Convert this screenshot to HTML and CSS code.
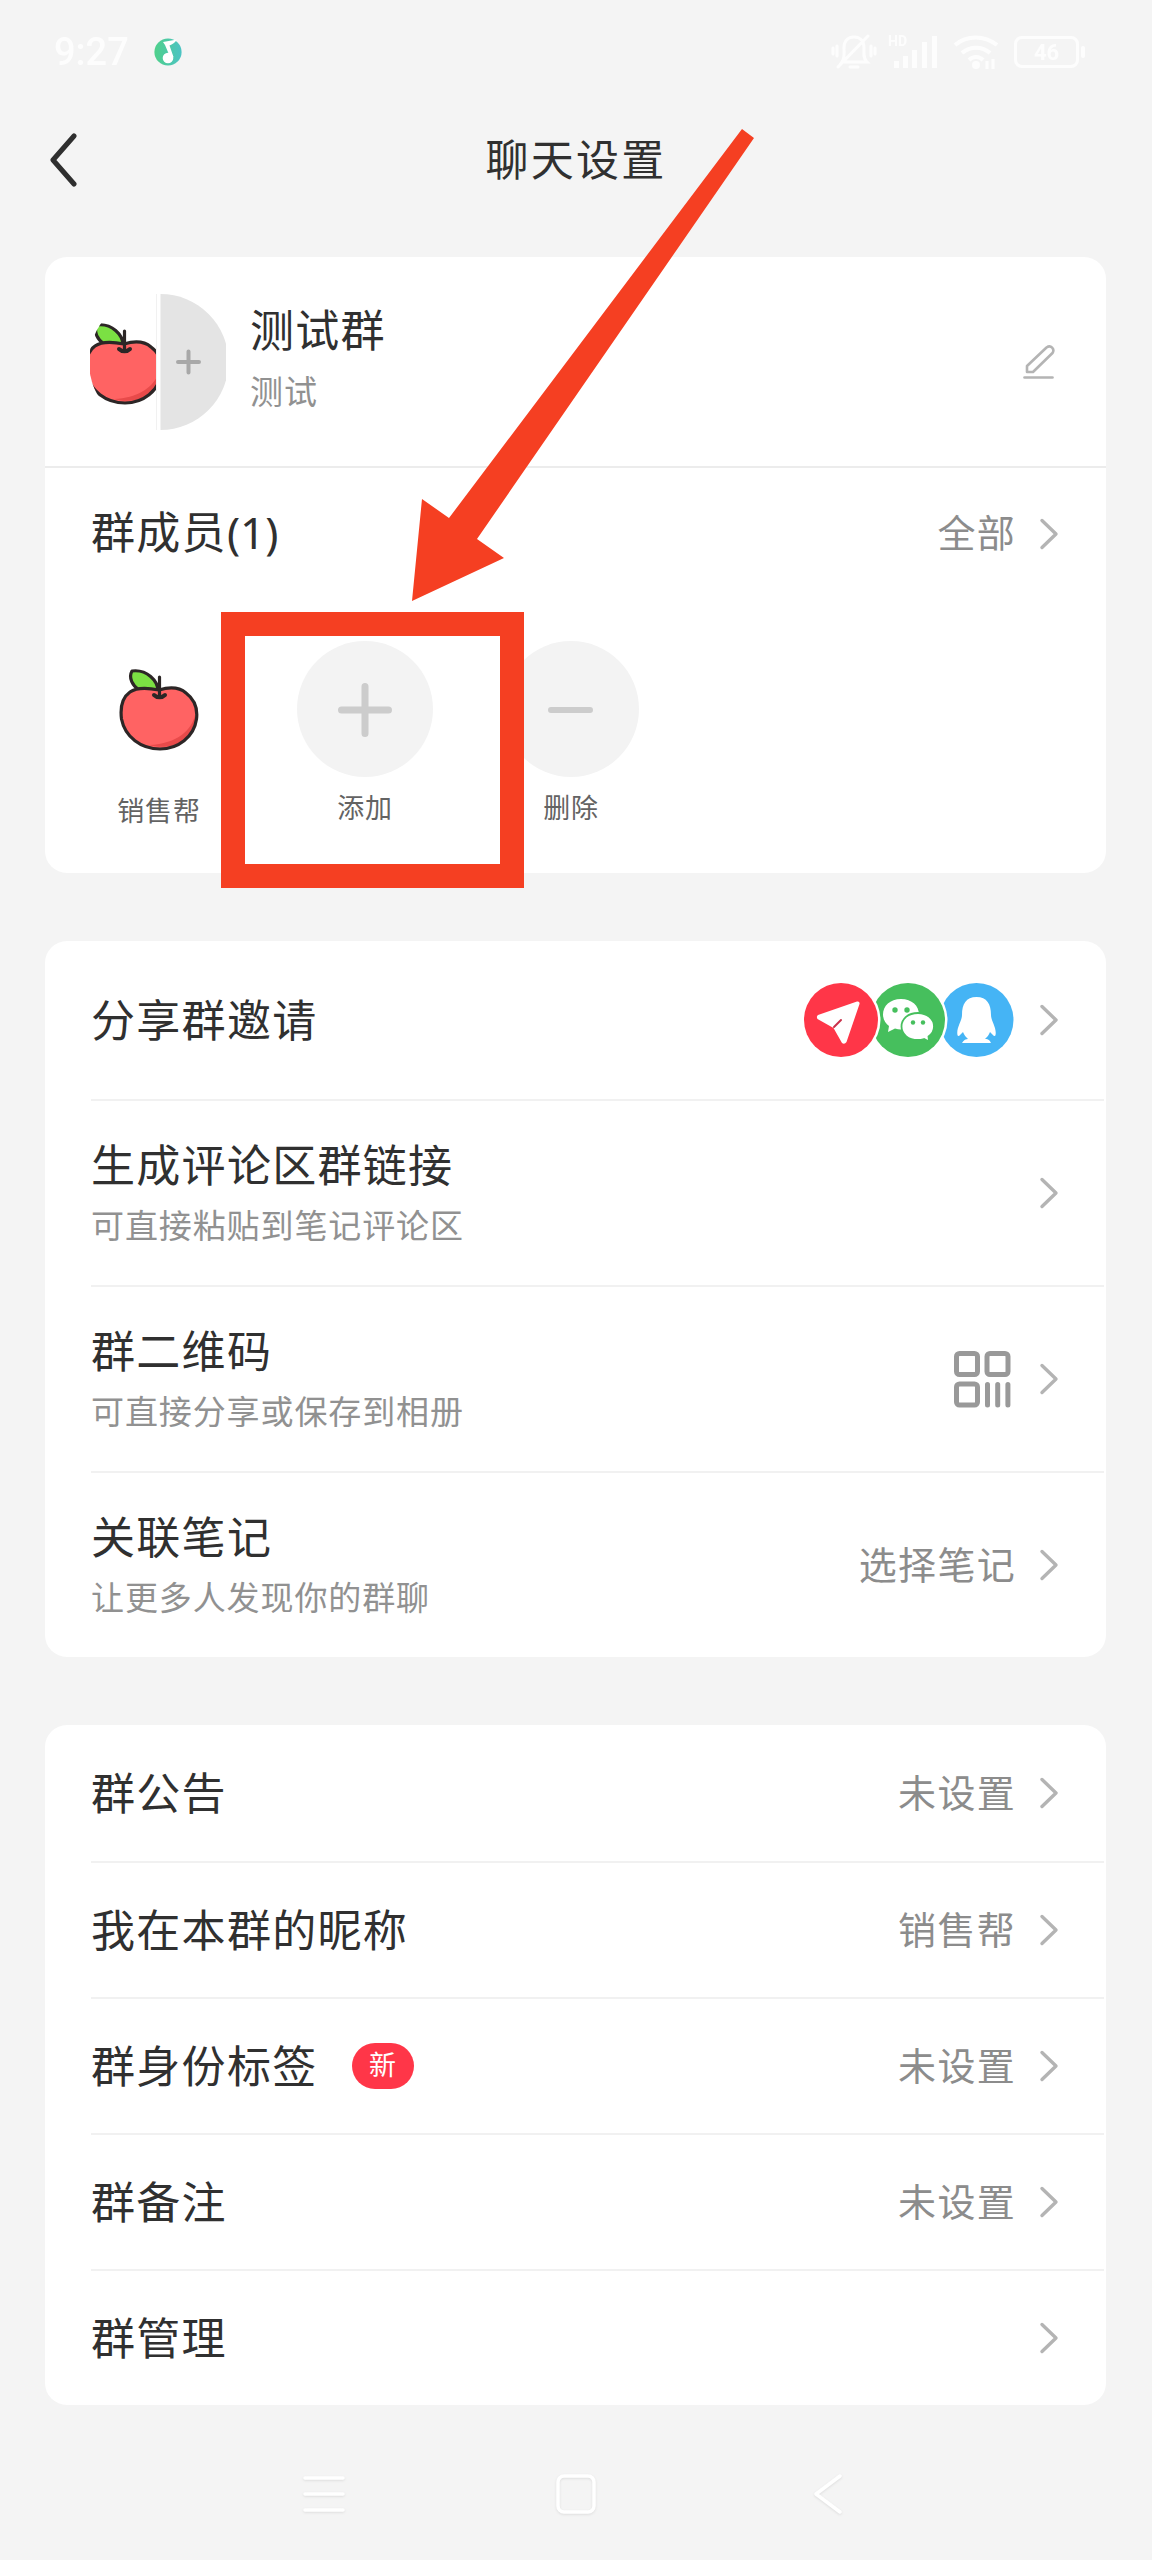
FILE: index.html
```html
<!DOCTYPE html>
<html lang="zh-CN">
<head>
<meta charset="utf-8">
<title>聊天设置</title>
<link rel="stylesheet" href="styles.css">
</head>
<body>
<svg class="defs" width="0" height="0" aria-hidden="true">
  <symbol id="chevron" viewBox="0 0 20 34"><path d="M3 3.500 17 17 3 30.500" fill="none" stroke="#b4b4b4" stroke-width="3.400" stroke-linecap="round" stroke-linejoin="round"/></symbol>
  <symbol id="apple" viewBox="0 0 80 84">
    <path d="M13 4C9 11 14 19 20 23L39 24C39 14 28 2 13 4Z" fill="#7be043" stroke="#2c2626" stroke-width="3.200" stroke-linejoin="round"/>
    <path d="M40 23C50 20 60 20 67 26C75 32 79 40 77.500 52C75 70 59 82 41 82C22 82 6 70 2.500 52C1 40 4 30 11 25C18 20 30 21 40 23Z" fill="#ff6363"/>
    <path d="M76 48C73 62 59 77 30 78C50 84 79 75 76 48Z" fill="#e84a4a"/>
    <path d="M40 23C50 20 60 20 67 26C75 32 79 40 77.500 52C75 70 59 82 41 82C22 82 6 70 2.500 52C1 40 4 30 11 25C18 20 30 21 40 23Z" fill="none" stroke="#2c2626" stroke-width="3.200"/>
    <path d="M40.500 10V29" fill="none" stroke="#2c2626" stroke-width="3.200" stroke-linecap="round"/>
    <path d="M35 28C38 31 43 31 46 28" fill="none" stroke="#2c2626" stroke-width="4" stroke-linecap="round"/>
  </symbol>
</svg>

<div class="phone">
  <div class="status">
    <span class="clock">9:27</span>
    <svg class="music" width="28" height="28" viewBox="0 0 28 28">
      <defs><linearGradient id="mg"><stop offset="0" stop-color="#4fd08a"/><stop offset="1" stop-color="#4cc3c4"/></linearGradient></defs>
      <circle cx="14" cy="14" r="13.600" fill="url(#mg)"/>
      <circle cx="14" cy="20" r="5.300" fill="#fff"/>
      <path d="M9 4 23 1.500Q20 6 15.500 7.500L19.500 19 16.500 20 11 7Z" fill="#fff"/>
    </svg>
    <div class="indicators">
      <svg width="46" height="38" viewBox="0 0 46 38" fill="none" stroke="#fff" stroke-width="3" stroke-linecap="round">
        <path d="M11 29C14 25 13 21 13 15C13 8 17 4 23 4S33 8 33 15C33 21 32 25 36 29ZM19 34H27M7 34 37 3M6 13V23M2 15V21M40 13V23M44 15V21"/>
      </svg>
      <div class="signal"><span class="hd">HD</span>
        <svg width="50" height="36" viewBox="0 0 50 36" fill="#fff"><path d="M5 27h5v7H5zM14 22h5v12h-5zM23 16h5v18h-5zM33 8h5v26h-5zM43 2h5v32h-5z"/></svg>
      </div>
      <svg class="wifi" width="46" height="36" viewBox="0 0 46 36">
        <g fill="none" stroke="#fff" stroke-width="4"><path d="M2 11C14 1 31 1 44 11"/><path d="M9 19C17 12 29 12 37 19"/><path d="M16 26C20 22 26 22 30 26"/></g>
        <circle cx="23" cy="31" r="4" fill="#fff"/><path d="M34 27v8M40 25v10" stroke="#fff" stroke-width="3"/>
      </svg>
      <div class="battery">46</div>
    </div>
  </div>

  <header class="navbar">
    <svg class="back" width="30" height="54" viewBox="0 0 30 54"><path d="M25 3 4 27 25 51" fill="none" stroke="#2f2f2f" stroke-width="5" stroke-linecap="round" stroke-linejoin="round"/></svg>
    <h1>聊天设置</h1>
  </header>

  <main>
    <section class="card">
      <div class="group">
        <svg class="avatar" width="136" height="136" viewBox="0 0 136 136">
          <defs><clipPath id="half"><path d="M67 0A68 68 0 0 0 67 136Z"/></clipPath></defs>
          <g clip-path="url(#half)"><use href="#apple" x="-6" y="27" width="80" height="84"/></g>
          <path d="M66.500 0V136" stroke="#f1f1f1"/>
          <path d="M70.500 0A68 68 0 0 1 70.500 136Z" fill="#e4e4e4"/>
          <path d="M88 68h21M98.500 57.500v21" stroke="#a8a8a8" stroke-width="4" stroke-linecap="round"/>
        </svg>
        <div class="group-text"><div class="title">测试群</div><div class="sub">测试</div></div>
        <svg class="edit" width="34" height="36" viewBox="0 0 34 36" fill="none" stroke="#b4b4b4" stroke-width="2.600" stroke-linecap="round" stroke-linejoin="round">
          <path d="M5 28V22L24.500 3.500C29 .5 33 5 30.500 9L11 28Z"/><path d="M2.500 33.500H30.500"/>
        </svg>
      </div>
      <div class="members-head"><span class="title">群成员<span class="count">(1)</span></span><span class="value">全部</span><svg class="chev"><use href="#chevron"/></svg></div>
      <div class="members">
        <div class="member"><div class="pic"><svg width="80" height="84"><use href="#apple"/></svg></div><span class="low">销售帮</span></div>
        <div class="member"><div class="pic round"><svg width="136" height="136" viewBox="0 0 136 136"><path d="M44.500 69h47M68 45.500v47" stroke="#ccc" stroke-width="7" stroke-linecap="round"/></svg></div><span>添加</span></div>
        <div class="member"><div class="pic round"><svg width="136" height="136" viewBox="0 0 136 136"><path d="M48 69h39" stroke="#ccc" stroke-width="6" stroke-linecap="round"/></svg></div><span>删除</span></div>
      </div>
    </section>

    <section class="card">
      <div class="row share"><span class="title">分享群邀请</span>
        <svg class="apps" width="211" height="76" viewBox="0 0 211 76">
          <circle cx="173.500" cy="38" r="37" fill="#45b4f5"/>
          <path d="M173.500 15C163 15 159 22 159 33C159 39 153 46 154.500 53C155 56 158 52 160 50C161 53 163 55 165 57C161 57 160 60 159 61H188C187 59 186 57 182 57C184 55 186 53 187 50C189 52 192 56 192.500 53C194 46 188 39 188 33C188 22 184 15 173.500 15Z" fill="#fff"/>
          <circle cx="105" cy="38" r="39.500" fill="#fff"/><circle cx="105" cy="38" r="37" fill="#46bf5d"/>
          <path d="M98 17C87 17 80 24 80 32.500C80 38 83 42 86 44L85 50L92 46.500C94 47 96 47.500 98 47.500C109 47.500 116 41 116 32.500S109 17 98 17Z" fill="#fff"/>
          <path d="M115 31C105 31 98.500 37 98.500 44.500S105 58 115 58C117 58 119 57.600 121 57L126 59.500L125.500 54.500C129 52 131 48.500 131 44.500C131 37 124 31 115 31Z" fill="#fff" stroke="#46bf5d" stroke-width="1.800"/>
          <g fill="#46bf5d"><circle cx="92" cy="28" r="2.700"/><circle cx="104" cy="28" r="2.700"/><circle cx="110" cy="40.500" r="2.200"/><circle cx="120" cy="40.500" r="2.200"/></g>
          <circle cx="38" cy="38" r="39.500" fill="#fff"/><circle cx="38" cy="38" r="37" fill="#ff3648"/>
          <path d="M15 33 54 19.500Q57 19 56.500 22L43.500 60Q41.500 63 39 61L30.500 46 14.500 37Q13 34.500 15 33Z" fill="#fff"/>
          <path d="M31 45 38 38" stroke="#c9304a" stroke-width="2" stroke-linecap="round"/>
        </svg>
        <svg class="chev"><use href="#chevron"/></svg></div>
      <div class="row double"><div class="texts"><div class="title">生成评论区群链接</div><div class="sub">可直接粘贴到笔记评论区</div></div><svg class="chev"><use href="#chevron"/></svg></div>
      <div class="row double"><div class="texts"><div class="title">群二维码</div><div class="sub">可直接分享或保存到相册</div></div>
        <svg class="qr" width="57" height="57" viewBox="0 0 57 57" fill="none" stroke="#999" stroke-width="5"><rect x="2.500" y="2.500" width="21" height="21" rx="3"/><rect x="33" y="2.500" width="21" height="21" rx="3"/><rect x="2.500" y="33" width="21" height="21" rx="3"/><path d="M33.500 33.500v20.500M43.700 33.500v20.500M53.900 33.500v20.500" stroke-linecap="round"/></svg>
        <svg class="chev"><use href="#chevron"/></svg></div>
      <div class="row double"><div class="texts"><div class="title">关联笔记</div><div class="sub">让更多人发现你的群聊</div></div><span class="value">选择笔记</span><svg class="chev"><use href="#chevron"/></svg></div>
    </section>

    <section class="card">
      <div class="row"><span class="title">群公告</span><span class="value">未设置</span><svg class="chev"><use href="#chevron"/></svg></div>
      <div class="row"><span class="title">我在本群的昵称</span><span class="value">销售帮</span><svg class="chev"><use href="#chevron"/></svg></div>
      <div class="row"><span class="title">群身份标签</span><span class="badge">新</span><span class="value">未设置</span><svg class="chev"><use href="#chevron"/></svg></div>
      <div class="row"><span class="title">群备注</span><span class="value">未设置</span><svg class="chev"><use href="#chevron"/></svg></div>
      <div class="row"><span class="title">群管理</span><svg class="chev"><use href="#chevron"/></svg></div>
    </section>
  </main>

  <footer class="keys">
    <svg width="48" height="44" viewBox="0 0 48 44"><path d="M5 6H43M5 22H43M5 38H43"/></svg>
    <svg width="48" height="48" viewBox="0 0 48 48"><rect x="6" y="6" width="36" height="36" rx="6"/></svg>
    <svg width="48" height="48" viewBox="0 0 48 48"><path d="M36 6 12 24 36 42"/></svg>
  </footer>

  <div class="highlight"></div>
  <svg class="arrow" width="344" height="474" viewBox="0 0 344 474"><path d="M332 1 344 10 67 411 94 430 2 473 12 371 39 390Z" fill="#f53f22"/></svg>
</div>
</body>
</html>
```

FILE: styles.css
```css
* { box-sizing: border-box; margin: 0; padding: 0; }
body { background: #f4f4f4; font-family: "Noto Sans CJK SC", sans-serif; color: #303030; }
svg { display: block; flex: none; }
.defs { position: absolute; }
.phone { position: relative; width: 1152px; height: 2560px; overflow: hidden; display: flex; flex-direction: column; }

/* system status bar */
.status { height: 104px; padding: 0 73px 0 54px; display: flex; align-items: center; color: #fff; }
.clock { font: 500 38px/40px Roboto, sans-serif; width: 100px; opacity: .85; }
.indicators { margin-left: auto; display: flex; align-items: center; gap: 12px; opacity: .85; }
.signal { position: relative; }
.hd { position: absolute; left: -1px; top: 0; font: 700 14px/14px Roboto, sans-serif; }
.wifi { margin-left: 2px; }
.battery { position: relative; width: 65px; height: 32px; margin-left: 3px; border: 3px solid #fff; border-radius: 8px; font: 700 22px/27px Roboto, sans-serif; text-align: center; }
.battery::after { content: ""; position: absolute; right: -9px; top: 7px; width: 4px; height: 12px; border-radius: 2px; background: #fff; }

/* page header */
.navbar { height: 112px; display: grid; grid-template-columns: 100px 1fr 100px; align-items: center; }
.back { margin-left: 49px; }
h1 { font-size: 43px; font-weight: 400; line-height: 60px; letter-spacing: 2.3px; text-align: center; padding-bottom: 7px; }

main { padding: 41px 46px 0 45px; display: flex; flex-direction: column; gap: 68px; }
.card { background: #fff; border-radius: 22px; }
.title { font-size: 44px; line-height: 60px; letter-spacing: 1.3px; white-space: nowrap; }
.count { font-family: "Noto Sans", sans-serif; letter-spacing: 0; }
.sub { font-size: 33px; line-height: 48px; letter-spacing: .9px; color: #919191; white-space: nowrap; }
.value { margin-left: auto; font-size: 38px; line-height: 56px; letter-spacing: 1.3px; color: #8c8c8c; padding-bottom: 5px; white-space: nowrap; }
.chev { width: 20px; height: 34px; margin-left: 23px; }

/* group summary */
.group { height: 211px; padding: 0 50px 0 45px; display: flex; align-items: center; border-bottom: 2px solid #ececec; }
.group-text { margin-left: 24px; padding-bottom: 11px; }
.group-text .sub { margin-top: 8px; }
.edit { margin-left: auto; }
.members-head { height: 136px; padding: 0 47px 5px 46px; display: flex; align-items: center; }
.members-head .title { padding-bottom: 6px; }
.members { height: 269px; padding: 37px 46px 0; display: flex; gap: 70px; }
.member { width: 136px; display: flex; flex-direction: column; align-items: center; }
.member span { font-size: 27px; line-height: 40px; letter-spacing: .8px; margin-top: 10px; color: #636363; white-space: nowrap; }
.member .low { margin-top: 13px; }
.pic { width: 136px; height: 136px; display: flex; align-items: center; justify-content: center; }
.round { border-radius: 50%; background: #f3f3f3; }

/* setting rows */
.row { height: 136px; margin: 0 2px 0 46px; padding-right: 45px; display: flex; align-items: center; }
.row + .row { border-top: 2px solid #f1f1f1; }
.row > .title { padding-bottom: 5px; }
.share { height: 158px; }
.double { height: 186px; }
.texts { padding-bottom: 5px; }
.texts .sub { margin-top: 7px; }
.apps, .qr { margin-left: auto; }
.apps { margin-right: 2px; }
.qr { margin-right: 5px; }
.texts + .chev, .title + .chev { margin-left: auto; }
.badge { width: 62px; height: 46px; margin-left: 34px; border-radius: 23px; background: #ff3648; color: #fff; font-size: 27px; line-height: 42px; text-align: center; }

/* system navigation keys */
.keys { margin-top: 63px; padding: 0 300px; height: 52px; display: flex; align-items: center; justify-content: space-between; }
.keys svg { fill: none; stroke: #fff; stroke-width: 3.500; stroke-linecap: round; stroke-linejoin: round; filter: drop-shadow(0 1px 1px #ddd); }

/* annotation over the page */
.highlight { position: absolute; left: 221px; top: 612px; width: 303px; height: 276px; border: 24px solid #f53f22; }
.arrow { position: absolute; left: 410px; top: 128px; }
```
